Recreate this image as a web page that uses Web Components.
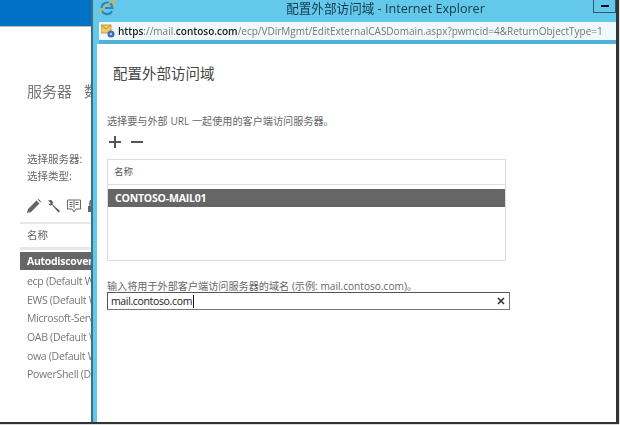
<!DOCTYPE html>
<html lang="zh">
<head>
<meta charset="utf-8" />
<title>配置外部访问域</title>
<style>
  html, body { margin: 0; padding: 0; background: #fff; }
  body { font-family: "Open Sans", "Noto Sans CJK SC", sans-serif; }
</style>
</head>
<body>
<template id="ecp-desktop">
  <style>
    :host { display: block; width: 620px; height: 425px; background: #fff; overflow: hidden; }
    .frame { position: relative; width: 617px; height: 422px; background: #fff; overflow: hidden; box-shadow: 1px 1px 1px 1px #333; filter: blur(.3px); }
  </style>
  <div class="frame"><slot></slot></div>
</template>

<template id="ecp-page">
  <style>
    :host { display: block; height: 100%; color: #777; }
    .bar { height: 26px; background: #0072c6; border-bottom: 1px solid #bbb; }
    .tabs { display: flex; gap: 12px; padding: 53px 0 0 27px; height: 22px; font-size: 15px; line-height: 22px; white-space: nowrap; }
    .fields { padding: 49px 0 0 27px; font-size: 10.500px; line-height: 17px; color: #666; }
    .tools { display: flex; gap: 6px; align-items: center; padding: 12px 0 0 27px; height: 18px; }
    .tools svg { width: 14px; height: 14px; display: block; flex: none; }
    .list { margin: 7px 0 0 20px; }
    .head { height: 23px; border-top: 2px solid #e4e8e8; border-bottom: 3px solid #e4e8e8; padding-left: 7px; font-size: 10.500px; line-height: 23px; color: #666; }
    .rows { padding-top: 2px; }
  </style>
  <div class="bar"></div>
  <div class="tabs"><span>服务器</span><span>数据库</span></div>
  <div class="fields"><div>选择服务器:</div><div>选择类型:</div></div>
  <div class="tools">
    <svg viewBox="0 0 14 14"><path d="M0 14l1-4 8.500-8.500L12.500 4.500 4 13zM10.500.5l1-.5 2.500 2.500-.5 1z" fill="#666"/></svg>
    <svg viewBox="0 0 14 14"><path d="M1 1.500L4 1l2 2-.5 2.500 7.500 6.500-1.500 1.500-6.500-7.500L3 6.500 1 4.500l2 .5 1-1z" fill="#555"/></svg>
    <svg viewBox="0 0 14 14"><path d="M.5 1h13v9H9l-2 3-2-3H.5zM7 1.500v8M2.500 3.500h3M2.500 5.500h3M2.500 7.500h3M8.500 3.500h3M8.500 5.500h3" fill="none" stroke="#666"/></svg>
    <svg viewBox="0 0 14 14"><path d="M3 7V4a3 3 0 0 1 6 0v3" fill="none" stroke="#666" stroke-width="1.500"/><rect x="1" y="7" width="10" height="6" fill="#666"/></svg>
  </div>
  <div class="list">
    <div class="head">名称</div>
    <div class="rows"><slot></slot></div>
  </div>
</template>

<template id="ecp-row">
  <style>
    :host { display: block; height: 18.700px; padding-left: 7px; font-size: 10.500px; letter-spacing: -.3px; line-height: 18.700px; color: #777; white-space: nowrap; }
    :host([selected]) { background: #666; color: #fff; font-weight: 700; height: 18px; line-height: 18px; margin-bottom: 2px; }
  </style>
  <slot></slot>
</template>

<template id="ie-window">
  <style>
    :host { position: absolute; left: 91px; top: 0; right: 0; bottom: 0; display: flex; flex-direction: column; background: #63c8ea; border-left: 2px solid #3d6f85; border-right: 1px solid #333; box-sizing: border-box; padding: 0 0 0 4px; }
    .title { position: relative; height: 22px; flex: none; text-align: center; font-size: 12.600px; line-height: 17px; color: #173a4c; padding-left: 58px; white-space: nowrap; }
    .logo { position: absolute; left: 2px; top: 0; width: 16px; height: 16px; }
    .min { position: absolute; right: 0; top: 0; width: 23px; height: 13px; border: 1px solid #35566a; border-top: 0; box-sizing: border-box; background: #63c8ea; }
    .min::after { content: ""; position: absolute; left: 7px; top: 5px; width: 8px; height: 2px; background: #111; }
    .address { height: 18px; flex: none; margin-left: 2px; display: flex; align-items: center; gap: 3px; background: #eff8fc; border-bottom: 4px solid #4fb2d4; padding-left: 2px; font-size: 10px; color: #777; white-space: nowrap; overflow: hidden; }
    .address svg { width: 14px; height: 14px; flex: none; }
    .content { flex: 1; background: #fff; min-height: 0; }
  </style>
  <div class="title">
    <svg class="logo" viewBox="0 0 16 16">
      <path d="M2.500 8a5.500 5.500 0 0 1 11 0H6M2.800 10.500A5.500 5.500 0 0 0 13 11" fill="none" stroke="#2a86c8" stroke-width="2.200"/>
      <path d="M.8 14C2 9.500 9 2.500 15 .8c-.5 2-.5 4-.2 6" fill="none" stroke="#e8b030" stroke-width="1.300"/>
    </svg>
    <slot name="title"></slot>
    <div class="min"></div>
  </div>
  <div class="address">
    <svg viewBox="0 0 14 14">
      <rect x="0" y="1" width="10" height="8" fill="#f0cc60" stroke="#b89030" stroke-width=".8"/>
      <path d="M0 1l5 4 5-4" fill="none" stroke="#a88020" stroke-width=".8"/>
      <circle cx="10" cy="10" r="3.500" fill="#3f68b8"/><circle cx="10" cy="10" r="1.200" fill="#b8cce8"/>
    </svg>
    <span><slot name="url"></slot></span>
  </div>
  <div class="content"><slot></slot></div>
</template>

<template id="domain-form">
  <style>
    :host { display: block; padding: 20px 0 0 10px; color: #555; }
    h1 { margin: 0 0 0 6px; font-size: 14.500px; line-height: 20px; font-weight: 400; color: #444; }
    .hint { font-size: 10.150px; line-height: 14px; color: #666; white-space: nowrap; }
    .pick { margin-top: 30px; }
    .tools { display: flex; gap: 8px; height: 16px; margin: 7px 0 8px 1px; }
    .tools svg { width: 14px; height: 14px; display: block; }
    .domain { margin-top: 18px; }
    .domain-field { display: flex; align-items: center; width: 403px; height: 18px; margin-top: -1px; box-sizing: border-box; border: 1px solid #555; border-bottom-color: #777; border-right-color: #777; padding: 0 4px 0 3px; font-size: 10.500px; letter-spacing: -.35px; line-height: 14px; color: #222; background: #fff; }
    .domain-field .caret { width: 1px; height: 13px; background: #111; margin-left: 1px; }
    .domain-field .x { margin-left: auto; width: 8px; height: 8px; display: block; }
  </style>
  <h1><slot name="heading"></slot></h1>
  <div class="hint pick"><slot name="hint"></slot></div>
  <div class="tools">
    <svg viewBox="0 0 14 14"><path d="M7 1v12M1 7h12" stroke="#555" stroke-width="2"/></svg>
    <svg viewBox="0 0 14 14"><path d="M1 7h12" stroke="#555" stroke-width="2"/></svg>
  </div>
  <slot name="table"></slot>
  <div class="hint domain"><slot name="label"></slot></div>
  <div class="domain-field">
    <span><slot name="value"></slot></span><span class="caret"></span>
    <svg class="x" viewBox="0 0 8 8"><path d="M1 1l6 6M7 1l-6 6" stroke="#333" stroke-width="1.600"/></svg>
  </div>
</template>

<template id="server-table">
  <style>
    :host { display: block; width: 399px; height: 102px; box-sizing: border-box; border: 1px solid #d8dddd; }
    .head { height: 24px; border-bottom: 1px solid #d8e0e0; padding-left: 6px; font-size: 9.500px; line-height: 24px; color: #555; }
    .rows { padding-top: 4px; }
    ::slotted(.row) { display: block; height: 18px; background: #666; color: #fff; font-weight: 700; font-size: 10.500px; letter-spacing: -.2px; line-height: 18px; padding-left: 7px; }
  </style>
  <div class="head"><slot name="head"></slot></div>
  <div class="rows"><slot></slot></div>
</template>

<ecp-desktop>
  <ecp-page>
    <ecp-row selected>Autodiscover</ecp-row>
    <ecp-row>ecp (Default W</ecp-row>
    <ecp-row>EWS (Default W</ecp-row>
    <ecp-row>Microsoft-Serv</ecp-row>
    <ecp-row>OAB (Default W</ecp-row>
    <ecp-row>owa (Default W</ecp-row>
    <ecp-row>PowerShell (D</ecp-row>
  </ecp-page>
  <ie-window>
    <span slot="title">配置外部访问域 - Internet Explorer</span>
    <span slot="url"><b style="font-weight:600;color:#222">https</b>://mail.<b style="font-weight:600;color:#222">contoso.com</b>/ecp/VDirMgmt/EditExternalCASDomain.aspx?pwmcid=4&amp;ReturnObjectType=1</span>
    <domain-form>
      <span slot="heading">配置外部访问域</span>
      <span slot="hint">选择要与外部 URL 一起使用的客户端访问服务器。</span>
      <server-table slot="table">
        <span slot="head">名称</span>
        <span class="row">CONTOSO-MAIL01</span>
      </server-table>
      <span slot="label">输入将用于外部客户端访问服务器的域名 (示例: mail.contoso.com)。</span>
      <span slot="value">mail.contoso.com</span>
    </domain-form>
  </ie-window>
</ecp-desktop>

<script>
  // every element just clones its template into an open shadow root
  ["ecp-desktop", "ecp-page", "ecp-row", "ie-window", "domain-form", "server-table"].forEach((name) => {
    customElements.define(name, class extends HTMLElement {
      constructor() {
        super();
        const template = document.getElementById(name);
        this.attachShadow({ mode: "open" }).appendChild(template.content.cloneNode(true));
      }
    });
  });
</script>
</body>
</html>
